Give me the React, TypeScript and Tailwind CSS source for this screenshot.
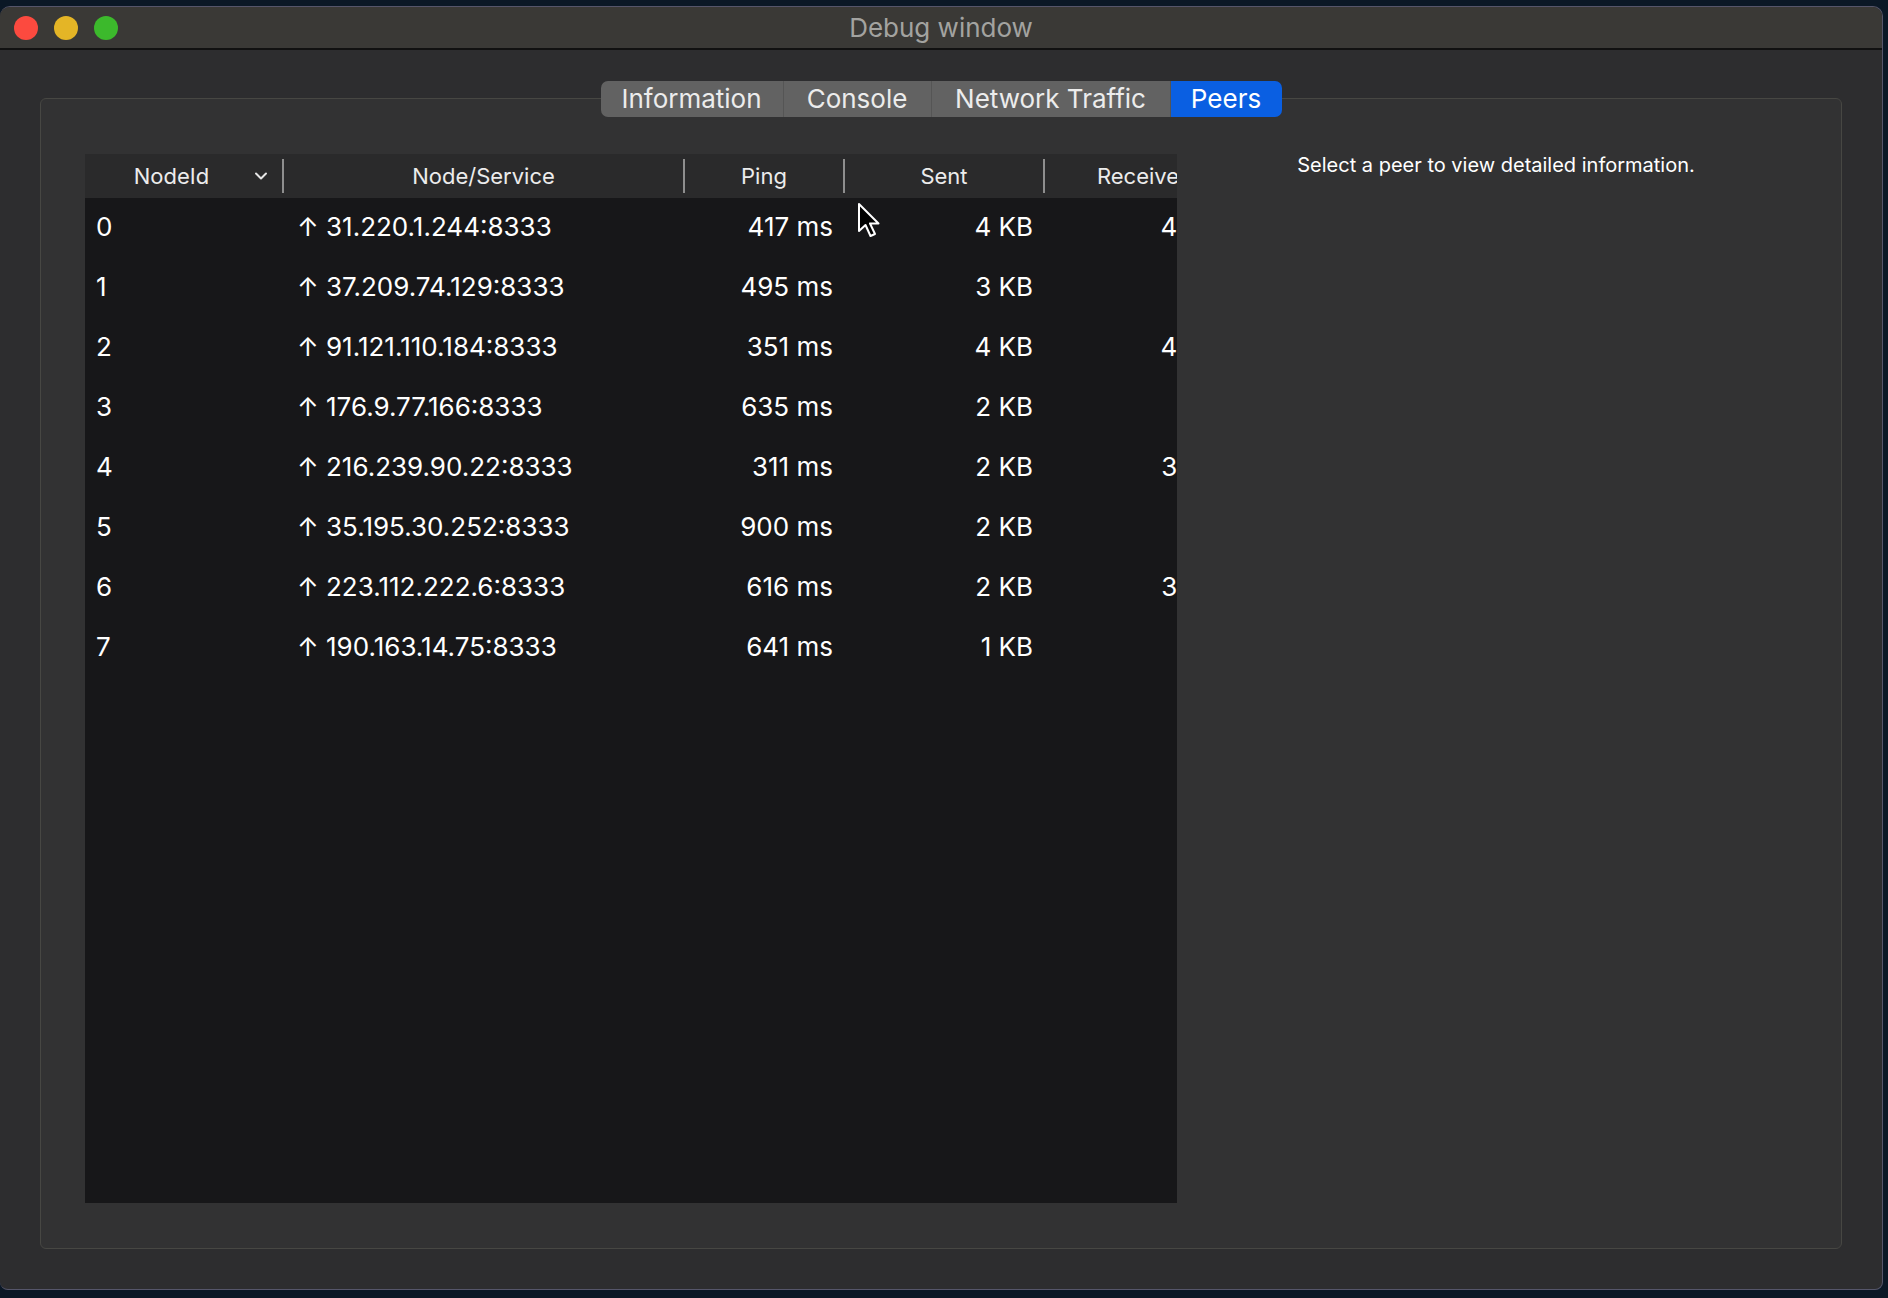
import React from "react";

type Peer = {
  id: number;
  addr: string;
  ping: string;
  sent: string;
  recv: string;
};

const peers: Peer[] = [
  { id: 0, addr: "31.220.1.244:8333", ping: "417 ms", sent: "4 KB", recv: "4 KB" },
  { id: 1, addr: "37.209.74.129:8333", ping: "495 ms", sent: "3 KB", recv: "0 B" },
  { id: 2, addr: "91.121.110.184:8333", ping: "351 ms", sent: "4 KB", recv: "4 KB" },
  { id: 3, addr: "176.9.77.166:8333", ping: "635 ms", sent: "2 KB", recv: "0 B" },
  { id: 4, addr: "216.239.90.22:8333", ping: "311 ms", sent: "2 KB", recv: "3 KB" },
  { id: 5, addr: "35.195.30.252:8333", ping: "900 ms", sent: "2 KB", recv: "0 B" },
  { id: 6, addr: "223.112.222.6:8333", ping: "616 ms", sent: "2 KB", recv: "3 KB" },
  { id: 7, addr: "190.163.14.75:8333", ping: "641 ms", sent: "1 KB", recv: "0 B" },
];

const tabs = ["Information", "Console", "Network Traffic", "Peers"];
const tabWidths = ["w-[183px]", "w-[148px]", "w-[239px]", "w-[111px]"];

function Divider() {
  return <span className="w-[2px] h-[34px] bg-[#8e8e8e] shrink-0" />;
}

function Chevron() {
  return (
    <svg width="14" height="10" viewBox="0 0 14 10" fill="none">
      <path d="M2 2.5l5 5 5-5" stroke="#e6e6e6" strokeWidth="2" strokeLinecap="round" strokeLinejoin="round" />
    </svg>
  );
}

function Cursor() {
  return (
    <svg width="24" height="37" viewBox="0 0 24 37" className="absolute left-[857px] top-[202px]">
      <path
        d="M2 2 L2 29 L8.5 23 L13.5 34 L18 32 L13 21.5 L21.5 21.5 Z"
        fill="#000"
        stroke="#fff"
        strokeWidth="2"
        strokeLinejoin="round"
      />
    </svg>
  );
}

export default function App() {
  const font = { fontFamily: "Inter, 'Liberation Sans', sans-serif" };
  return (
    <div
      className="relative w-[1888px] h-[1298px] bg-[#0b1826] pt-[6px] pr-[5px] pb-[8px] overflow-hidden"
      style={font}
    >
      <div className="flex flex-col h-full rounded-t-[10px] rounded-b-[8px] border-t border-[#6b6b68] border-b border-r border-[#55556a] bg-[#2d2d2f] overflow-hidden">
        {/* title bar */}
        <div className="relative flex items-center h-[43px] bg-[#3a3936] border-b-2 border-[#111] shrink-0">
          <div className="flex items-center gap-[16px] pl-[14px]">
            <span className="w-[24px] h-[24px] rounded-full bg-[#fc4a3f]" />
            <span className="w-[24px] h-[24px] rounded-full bg-[#e4b526]" />
            <span className="w-[24px] h-[24px] rounded-full bg-[#3cb92c]" />
          </div>
          <div className="absolute inset-0 flex items-center justify-center text-[26px] text-[#a3a3a0] pointer-events-none">
            Debug window
          </div>
        </div>

        {/* content */}
        <div className="flex flex-col flex-1 pl-[40px] pr-[40px] pt-[31px] pb-[40px]">
          <div className="relative z-10 flex justify-center">
            <div className="flex h-[36px] rounded-[7px] overflow-hidden text-[26px] leading-none">
              {tabs.map((t, i) => {
                const active = t === "Peers";
                return (
                  <div
                    key={t}
                    className={`${tabWidths[i]} flex items-center justify-center ${
                      active
                        ? "bg-[#0a5fe2] text-white"
                        : "bg-[#626262] text-[#ececec] border-r border-[#555]"
                    }`}
                  >
                    {t}
                  </div>
                );
              })}
            </div>
          </div>

          <div className="-mt-[19px] flex flex-1 bg-[#323233] border border-[#474743] rounded-[6px] pl-[44px] pt-[55px] pb-[45px]">
            {/* table; the Receive column is cut off by the table's right edge, as in the window */}
            <div className="w-[1092px] shrink-0 flex flex-col bg-[#171719] overflow-hidden">
              <div className="flex h-[44px] bg-[#2a2a2b] text-[22px] text-[#ececec] shrink-0">
                <div className="w-[199px] shrink-0 flex items-center">
                  <span className="flex-1 text-center pl-[4px]">NodeId</span>
                  <span className="mr-[14px]"><Chevron /></span>
                  <Divider />
                </div>
                <div className="w-[401px] shrink-0 flex items-center">
                  <span className="flex-1 text-center">Node/Service</span>
                  <Divider />
                </div>
                <div className="w-[160px] shrink-0 flex items-center">
                  <span className="flex-1 text-center">Ping</span>
                  <Divider />
                </div>
                <div className="w-[200px] shrink-0 flex items-center">
                  <span className="flex-1 text-center">Sent</span>
                  <Divider />
                </div>
                <div className="w-[186px] shrink-0 flex items-center">
                  <span className="flex-1 text-center">Receive</span>
                </div>
              </div>

              {peers.map((p) => (
                <div key={p.id} className="flex h-[60px] items-center pb-[4px] text-[26px] text-white shrink-0">
                  <div className="w-[199px] shrink-0 pl-[11px]">{p.id}</div>
                  <div className="w-[401px] shrink-0 pl-[13px]">↑ {p.addr}</div>
                  <div className="w-[160px] shrink-0 pr-[12px] text-right">{p.ping}</div>
                  <div className="w-[200px] shrink-0 pr-[12px] text-right">{p.sent}</div>
                  <div className="w-[186px] shrink-0 pr-[12px] text-right">{p.recv}</div>
                </div>
              ))}
            </div>

            {/* details */}
            <div className="flex-1 flex justify-center pr-[26px]">
              <p className="text-[20px] leading-[22px] text-white">Select a peer to view detailed information.</p>
            </div>
          </div>
        </div>
      </div>
      <Cursor />
    </div>
  );
}
